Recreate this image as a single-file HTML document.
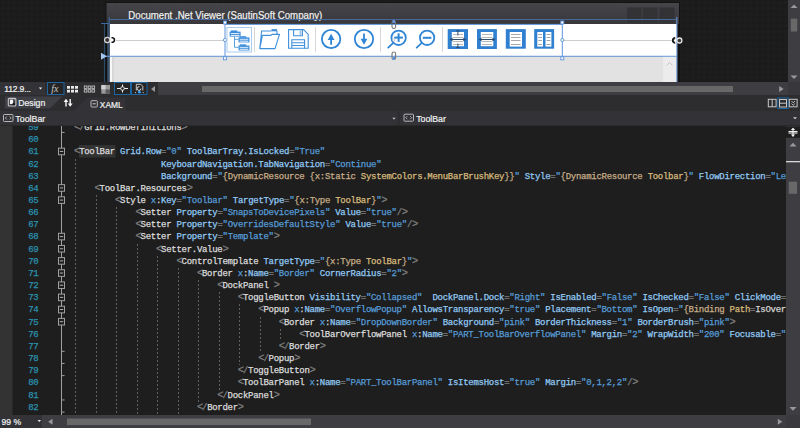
<!DOCTYPE html>
<html><head><meta charset="utf-8">
<style>
*{box-sizing:border-box}
html,body{margin:0;padding:0;width:800px;height:428px;overflow:hidden;background:#1e1e1e;font-family:"Liberation Sans",sans-serif}
.abs{position:absolute}
#design{position:absolute;left:0;top:0;width:800px;height:82px;background:#1f1f1f;overflow:hidden}
#win{position:absolute;left:106px;top:3px;width:573px;height:79px;background:#3a3a3d;border:1px solid #141414;border-bottom:none}
#title{position:absolute;left:128px;top:9px;font-size:9.66px;color:#f0f0f0;white-space:nowrap;line-height:12px}
#tb{position:absolute;left:109px;top:24px;width:567px;height:32px;background:#fff}
#gray{position:absolute;left:109px;top:56px;width:567px;height:26px;background:#e3e3e3}
#vsb1{position:absolute;left:788px;top:0;width:12px;height:83px;background:#3e3e42}
#row1{position:absolute;left:0;top:82px;width:800px;height:13px}
#row2{position:absolute;left:0;top:95px;width:800px;height:31px}
#row3{position:absolute;left:0;top:111px;width:800px;height:15px;background:#333337;border-bottom:1px solid #252526}
#editor{position:absolute;left:0;top:126px;width:800px;height:289px;background:#1e1e1e;overflow:hidden}
#lm{position:absolute;left:0;top:126px;width:12.5px;height:289px;background:#333333}
#codeclip{position:absolute;left:0;top:126px;width:786px;height:289px;overflow:hidden}
.ln{position:absolute;white-space:pre;-webkit-text-stroke:0.25px currentColor;font-family:"Liberation Mono",monospace;font-size:9px;letter-spacing:-0.28px;line-height:12.16px;height:12.16px;color:#dcdcdc}
.num{position:absolute;-webkit-text-stroke:0.25px currentColor;left:0;width:38.5px;text-align:right;white-space:pre;font-family:"Liberation Mono",monospace;font-size:9px;letter-spacing:-0.28px;line-height:12.16px;color:#2b91af}
.g{position:absolute;width:1px;background:repeating-linear-gradient(to bottom,#5f5f5f 0 2px,transparent 2px 4px)}
.d{color:#808080}.big{font-size:10.4px;letter-spacing:-1.12px;line-height:1px}.e{color:#dcdcdc}.a{color:#92caf4}.n{color:#569cd6}.c{color:#d4d4d4}.v{color:#569cd6}
.mb{color:#c8ad88}.mv{color:#d7ba7d}.mp{color:#d7ba7d}.mw{color:#d4d4d4}
#vsb2{position:absolute;left:786px;top:126px;width:14px;height:289px}
#status{position:absolute;left:0;top:414.5px;width:800px;height:13.5px}
.ui{position:absolute;white-space:nowrap;color:#f1f1f1;font-size:9px;line-height:11px;-webkit-text-stroke:0.2px currentColor}
</style></head><body>
<div id="design">
<svg id="dsvg" width="800" height="82" viewBox="0 0 800 82" style="position:absolute;left:0;top:0">
<defs>
<pattern id="tex" width="5.8" height="5.8" patternUnits="userSpaceOnUse"><rect width="5.8" height="5.8" fill="#1c1c1c"/><rect x="0" y="0" width="1.2" height="1.2" fill="#171717"/><rect x="3.8" y="0" width="1.2" height="1.2" fill="#191919"/><rect x="0" y="3.8" width="1.2" height="1.2" fill="#191919"/><rect x="1.5" y="1.5" width="2" height="2" fill="#1f1f1f"/></pattern>
<linearGradient id="tg" x1="0" y1="0" x2="0" y2="1"><stop offset="0" stop-color="#46464a"/><stop offset="1" stop-color="#38383c"/></linearGradient>
</defs>
<rect x="0" y="0" width="800" height="82" fill="url(#tex)"/>
<!-- window -->
<rect x="105.5" y="2" width="574.5" height="80" fill="#121212"/>
<rect x="106.5" y="3" width="572.5" height="21" fill="url(#tg)"/>
<rect x="627" y="7.5" width="14.5" height="15" fill="#333336"/>
<rect x="643" y="7.5" width="14.5" height="15" fill="#333336"/>
<rect x="659.5" y="7.5" width="15" height="15" fill="#333336"/>
<text x="128.3" y="18.8" font-family="Liberation Sans" font-size="10.4" textLength="194" lengthAdjust="spacingAndGlyphs" fill="#f2f2f2" stroke="#f2f2f2" stroke-width="0.2">Document .Net Viewer (SautinSoft Company)</text>
<!-- left dark strip -->
<rect x="106.5" y="24" width="3.4" height="58" fill="#3a5068"/>
<rect x="106" y="24" width="1.2" height="58" fill="#0e0e0e"/>
<!-- toolbar white -->
<rect x="109.9" y="24" width="567.3" height="32.5" fill="#ffffff"/>
<!-- gray area -->
<rect x="109.9" y="56.5" width="567.3" height="25.5" fill="#e2e2e2"/>
<rect x="109.9" y="56.5" width="2.3" height="25.5" fill="#f8f8f8"/>
<rect x="112.2" y="56.5" width="1.6" height="25.5" fill="#d4d4d4"/>
<rect x="663" y="56.5" width="13.5" height="25.5" fill="#ececec"/>
<path d="M666.5 65.5 L669.5 62.5 L672.5 65.5" fill="none" stroke="#c0c0c0" stroke-width="0.9"/>
<!-- blue lines -->
<line x1="104.5" y1="23.5" x2="104.5" y2="82" stroke="#2c4a6a" stroke-width="1.2"/>
<line x1="101" y1="23.5" x2="109.5" y2="23.5" stroke="#3d6aa0" stroke-width="1"/>
<line x1="109.3" y1="17" x2="109.3" y2="24" stroke="#3d6aa0" stroke-width="1"/>
<line x1="109.5" y1="19.5" x2="676.5" y2="19.5" stroke="#48699a" stroke-width="1"/>
<line x1="676.8" y1="17" x2="676.8" y2="82" stroke="#6a9ad8" stroke-width="1"/>
<line x1="105" y1="56.3" x2="677" y2="56.3" stroke="#6d9ee3" stroke-width="1.1"/>
<path d="M101 52.8 L106.8 56.3 L101 59.8 Z" fill="#a8c8f4"/>
<line x1="225" y1="24.4" x2="562.3" y2="24.4" stroke="#5f93dc" stroke-width="1"/>
<!-- center line -->
<line x1="116" y1="40.5" x2="225" y2="40.5" stroke="#cdcdcd" stroke-width="1"/>
<line x1="563" y1="40.5" x2="671" y2="40.5" stroke="#cdcdcd" stroke-width="1"/>
<!-- link adorners -->
<circle cx="107.2" cy="40" r="2.6" fill="#333" stroke="#d8d8d8" stroke-width="1.2"/>
<path d="M111.5 37.8 A2.3 2.3 0 1 1 111.5 42.2" fill="none" stroke="#111" stroke-width="1.6"/>
<path d="M675.2 38 A2.4 2.4 0 1 0 675.2 42.8" fill="none" stroke="#1a1a1a" stroke-width="2"/>
<circle cx="679.4" cy="40.5" r="2.5" fill="#3a3a3a" stroke="#e6e6e6" stroke-width="1.3"/>
<!-- selection -->
<line x1="225" y1="22.5" x2="225" y2="58" stroke="#5f93dc" stroke-width="1"/>
<line x1="562.3" y1="22.5" x2="562.3" y2="58" stroke="#5f93dc" stroke-width="1"/>
<g fill="#fff" stroke="#5f93dc" stroke-width="0.9">
<rect x="223.5" y="21" width="3" height="3"/><rect x="223.5" y="56.8" width="3" height="3"/>
<rect x="560.8" y="21" width="3" height="3"/><rect x="560.8" y="56.8" width="3" height="3"/>
<circle cx="225" cy="40" r="1.6"/><circle cx="562.3" cy="40" r="1.6"/>
</g>
<!-- margin adorners -->
<g fill="none" stroke="#777" stroke-width="1.1">
<rect x="392" y="21" width="3.6" height="7.5" rx="1.8"/>
<rect x="392" y="52" width="3.6" height="7.5" rx="1.8"/>
</g>
<rect x="392.6" y="20" width="2.4" height="3" fill="#5f93dc"/>
<rect x="392.6" y="57" width="2.4" height="3" fill="#5f93dc"/>
<!-- tree box -->
<rect x="227" y="27.5" width="24.5" height="24.5" fill="none" stroke="#a9cbf2" stroke-width="1"/>
<!-- separators -->
<g stroke="#d6d6d6" stroke-width="1">
<line x1="254.5" y1="27" x2="254.5" y2="52"/>
<line x1="315.5" y1="27" x2="315.5" y2="52"/>
<line x1="380.5" y1="27" x2="380.5" y2="52"/>
<line x1="442.5" y1="27" x2="442.5" y2="52"/>
</g>
<!-- tree icon -->
<g stroke="#5a9fe0" stroke-width="1" fill="none">
<path d="M234.5 36.7 V47.3 H238.5 M234.5 39.3 H238.5"/>
</g>
<rect x="230.8" y="30.4" width="6.5" height="1.6" fill="#3f8fdc"/><rect x="229.6" y="31.6" width="11" height="5" fill="#3f8fdc"/><rect x="230.8" y="33.0" width="8.6" height="1" fill="#d6e8fa"/><rect x="230.8" y="34.9" width="8.6" height="0.9" fill="#ffffff"/><rect x="239.7" y="36.2" width="6.5" height="1.6" fill="#3f8fdc"/><rect x="238.5" y="37.4" width="11" height="5" fill="#3f8fdc"/><rect x="239.7" y="38.8" width="8.6" height="1" fill="#d6e8fa"/><rect x="239.7" y="40.7" width="8.6" height="0.9" fill="#ffffff"/><rect x="239.7" y="44.3" width="6.5" height="1.6" fill="#3f8fdc"/><rect x="238.5" y="45.5" width="11" height="5" fill="#3f8fdc"/><rect x="239.7" y="46.9" width="8.6" height="1" fill="#d6e8fa"/><rect x="239.7" y="48.8" width="8.6" height="0.9" fill="#ffffff"/>
<!-- folder -->
<g stroke="#3f8fdc" stroke-width="1.1" fill="none" stroke-linejoin="round">
<path d="M259.8 48.6 L261.6 31 H271.5 M262.4 35.4 H271 L272 34.4 H279.5 L275 48.6 H259.8 Z"/>
<path d="M277 31 V34.4"/>
</g>
<rect x="271.5" y="29.1" width="5.6" height="2.2" fill="#3f8fdc"/>
<!-- save -->
<g stroke="#3f8fdc" stroke-width="1.1" fill="none" stroke-linejoin="round">
<path d="M288.6 29.6 H303.6 L308.2 34.4 V48.3 H288.6 Z"/>
<path d="M293.6 29.6 V35.8 H302.4 V29.6"/>
<path d="M291.8 48.3 V39.8 H304.6 V48.3 M291.8 42.7 H304.6 M291.8 45.5 H304.6"/>
</g>
<rect x="299.6" y="30.5" width="1.8" height="4.5" fill="#9cc4ee"/>
<!-- up/down -->
<g stroke="#2f85d6" stroke-width="1.8" fill="none">
<circle cx="331.1" cy="39" r="9.2"/>
<circle cx="364" cy="39" r="9.2"/>
<line x1="331.1" y1="38" x2="331.1" y2="44.7"/>
<line x1="364" y1="33.5" x2="364" y2="40"/>
</g>
<g fill="#2f85d6">
<path d="M327.7 40 L331.1 33.8 L334.5 40 Z"/>
<path d="M360.6 38.8 L364 44.8 L367.4 38.8 Z"/>
</g>
<!-- zoom in/out -->
<g stroke="#2f85d6" stroke-width="1.8" fill="none" stroke-linecap="round">
<circle cx="398.6" cy="37.8" r="7.2"/>
<line x1="393" y1="43.2" x2="388.2" y2="47.6"/>
<line x1="394.3" y1="37.6" x2="402.9" y2="37.6" stroke-width="2" stroke-linecap="butt"/>
<line x1="398.6" y1="33.3" x2="398.6" y2="41.9" stroke-width="2" stroke-linecap="butt"/>
<circle cx="427.1" cy="37.8" r="7.2"/>
<line x1="421.5" y1="43.2" x2="416.7" y2="47.6"/>
<line x1="422.8" y1="37.8" x2="431.4" y2="37.8" stroke-width="2" stroke-linecap="butt"/>
</g>
<circle cx="393.6" cy="40" r="1.3" fill="#fff" stroke="#9ab" stroke-width="0.6"/>
<!-- fit page -->
<rect x="447.7" y="29.1" width="20.3" height="19.9" fill="#2f80d0"/>
<rect x="451.8" y="32" width="12.2" height="14.2" fill="#fff"/>
<g stroke="#b8b8b8" stroke-width="1">
<line x1="453" y1="34.5" x2="463" y2="34.5"/><line x1="453" y1="37.5" x2="463" y2="37.5"/>
<line x1="453" y1="41.5" x2="463" y2="41.5"/><line x1="453" y1="44.5" x2="463" y2="44.5"/>
</g>
<g stroke="#2d4d72" stroke-width="1" fill="#2d4d72">
<line x1="451" y1="39.5" x2="465" y2="39.5"/>
<line x1="457.9" y1="31" x2="457.9" y2="35.5"/><line x1="457.9" y1="43.5" x2="457.9" y2="47.5"/>
<line x1="456" y1="30.8" x2="459.8" y2="30.8"/><line x1="456" y1="47.6" x2="459.8" y2="47.6"/>
</g>
<path d="M449.6 39.5 L452.5 37.6 V41.4 Z M466.2 39.5 L463.3 37.6 V41.4 Z" fill="#2d4d72"/>
<!-- fit width -->
<rect x="477" y="29.1" width="19.9" height="19.9" fill="#2f80d0"/>
<rect x="480.8" y="32" width="12.5" height="14.2" fill="#fff"/>
<g stroke="#b8b8b8" stroke-width="1">
<line x1="482" y1="34.5" x2="492" y2="34.5"/><line x1="482" y1="37.5" x2="492" y2="37.5"/>
<line x1="482" y1="41.5" x2="492" y2="41.5"/><line x1="482" y1="44.5" x2="492" y2="44.5"/>
</g>
<line x1="480" y1="39.5" x2="494" y2="39.5" stroke="#2d4d72" stroke-width="1"/>
<path d="M478.6 39.5 L481.5 37.6 V41.4 Z M495.4 39.5 L492.5 37.6 V41.4 Z" fill="#2d4d72"/>
<!-- single page -->
<rect x="505.8" y="29.1" width="20" height="19.6" fill="#2f80d0"/>
<rect x="509.7" y="32" width="12.3" height="14.6" fill="#fff"/>
<g stroke="#a8a8a8" stroke-width="1">
<line x1="511" y1="34.5" x2="520.5" y2="34.5"/><line x1="511" y1="37.5" x2="520.5" y2="37.5"/>
<line x1="511" y1="40.5" x2="520.5" y2="40.5"/><line x1="511" y1="44.5" x2="520.5" y2="44.5"/>
</g>
<!-- two pages -->
<rect x="534.2" y="29.1" width="19.9" height="19.6" fill="#2f80d0"/>
<rect x="537.3" y="32" width="5.7" height="14.6" fill="#fff"/>
<rect x="545.5" y="32" width="5.9" height="14.6" fill="#fff"/>
<g stroke="#9aa4ae" stroke-width="1">
<line x1="538.3" y1="34.5" x2="542" y2="34.5"/><line x1="538.3" y1="37.5" x2="542" y2="37.5"/>
<line x1="538.3" y1="40.5" x2="542" y2="40.5"/><line x1="538.3" y1="44.5" x2="542" y2="44.5"/>
<line x1="546.5" y1="34.5" x2="550.4" y2="34.5"/><line x1="546.5" y1="37.5" x2="550.4" y2="37.5"/>
<line x1="546.5" y1="40.5" x2="550.4" y2="40.5"/><line x1="546.5" y1="44.5" x2="550.4" y2="44.5"/>
</g>
<!-- right vertical scrollbar -->
<rect x="788" y="0" width="12" height="82" fill="#3e3e42"/>
<path d="M790.5 8 L794 4.5 L797.5 8 Z" fill="#999"/>
<rect x="790.8" y="18.7" width="6.4" height="12.8" fill="#686868"/>
<path d="M790.5 75.5 L794 79 L797.5 75.5 Z" fill="#999"/>
</svg>
</div>
<div id="row1">
<svg width="800" height="13" viewBox="0 82 800 13" style="position:absolute;left:0;top:0">
<rect x="0" y="82" width="800" height="13" fill="#2d2d30"/>
<rect x="158" y="82" width="630" height="13" fill="#3e3e42"/>
<rect x="788" y="82" width="12" height="13" fill="#38383c"/>
<rect x="0" y="82" width="45" height="13" fill="#333337"/>
<path d="M38.8 87.6 H42.2 L40.5 89.6 Z" fill="#f0f0f0"/>
<rect x="47.5" y="82.5" width="16.5" height="12" fill="#252526" stroke="#1d65a0" stroke-width="1"/>
<text x="51.3" y="92" font-family="Liberation Serif" font-style="italic" font-size="10" fill="#c8c8c8">fx</text>
<g fill="#e8e8e8">
<rect x="67" y="86" width="3" height="2.7"/><rect x="71" y="86" width="3" height="2.7"/><rect x="75" y="86" width="3" height="2.7"/>
<rect x="67" y="89.8" width="3" height="2.7"/><rect x="71" y="89.8" width="3" height="2.7"/><rect x="75" y="89.8" width="3" height="2.7"/>
</g>
<g fill="none" stroke="#bdbdbd" stroke-width="0.9">
<rect x="84.3" y="86" width="2.6" height="2.4"/><rect x="88.2" y="86" width="2.6" height="2.4"/><rect x="92" y="86" width="2.6" height="2.4"/>
<rect x="84.3" y="89.7" width="2.6" height="2.4"/><rect x="88.2" y="89.7" width="2.6" height="2.4"/><rect x="92" y="89.7" width="2.6" height="2.4"/>
</g>
<rect x="101.3" y="85" width="8.7" height="8.7" fill="#9a9a9a"/>
<rect x="101.3" y="85" width="4.3" height="4.3" fill="#d0d0d0"/>
<rect x="105.6" y="89.4" width="4.4" height="4.3" fill="#5c5c5c"/>
<rect x="114.5" y="82.5" width="16" height="12" fill="#252526" stroke="#1d65a0" stroke-width="1"/>
<g stroke="#f0f0f0" stroke-width="1" fill="none"><line x1="117" y1="88.5" x2="128" y2="88.5"/><line x1="122.5" y1="84.5" x2="122.5" y2="92.5"/></g>
<circle cx="122.5" cy="88.5" r="1.8" fill="#252526" stroke="#f0f0f0" stroke-width="0.9"/>
<rect x="131.5" y="82.5" width="15.5" height="12" fill="#252526" stroke="#1d65a0" stroke-width="1"/>
<path d="M136.3 90.5 V84.3 H140.8 L142.8 86.3 V90.5" fill="none" stroke="#d8d8d8" stroke-width="0.9"/>
<path d="M141 88.6 A1.9 1.9 0 1 1 139.5 86.7" fill="none" stroke="#e8e8e8" stroke-width="0.9"/>
<circle cx="139.4" cy="92.2" r="1.4" fill="#3a9ff0"/>
<circle cx="135.6" cy="92.6" r="0.6" fill="#ccc"/><circle cx="143.2" cy="92.6" r="0.6" fill="#ccc"/>
<path d="M155 86 V92 L151 89 Z" fill="#999"/>
<rect x="202" y="86" width="531" height="6" fill="#686868"/>
<path d="M779.2 86 V92 L783.6 89 Z" fill="#999"/>
</svg>
</div>
<div id="row2">
<svg width="800" height="31" viewBox="0 95 800 31" style="position:absolute;left:0;top:0">
<rect x="0" y="95" width="800" height="16" fill="#2d2d30"/>
<path d="M74 111 L87.5 97.5 H125.5 V111 Z" fill="#333337"/>
<path d="M5 96.5 H62 L50 108.5 H5 Z" fill="#3f3f46"/>
<rect x="8.3" y="98.4" width="7.6" height="7.6" rx="1" fill="#3f3f46" stroke="#c4c4c4" stroke-width="1.1"/>
<rect x="9.9" y="99.6" width="3.2" height="4.4" fill="#f4f4f4"/>
<circle cx="13.6" cy="104.1" r="1.2" fill="#111"/>
<path d="M14.2 99.2 L15.3 100.3" stroke="#aaa" stroke-width="0.8"/>
<g stroke="#f8f8f8" stroke-width="1.4">
<line x1="66" y1="101" x2="66" y2="106.5"/><line x1="70.2" y1="99" x2="70.2" y2="104.5"/>
</g>
<path d="M63.6 102 L66 98.8 L68.4 102 Z M67.8 103.5 L70.2 106.7 L72.6 103.5 Z" fill="#f8f8f8"/>
<rect x="91" y="100.7" width="6.3" height="6.3" rx="0.6" fill="none" stroke="#b8b8b8" stroke-width="1"/>
<line x1="92.6" y1="103.8" x2="95.7" y2="103.8" stroke="#d0d0d0" stroke-width="1"/>
<rect x="111" y="111" width="689" height="14.5" fill="#333337"/>
<rect x="0" y="111" width="800" height="14.5" fill="#333337"/>
<rect x="0" y="125" width="800" height="1" fill="#29292c"/>
<line x1="398.8" y1="111.5" x2="398.8" y2="125" stroke="#28282b" stroke-width="1"/>
<path d="M392.3 117.8 H395.7 L394 119.4 Z" fill="#d0d0d0"/>
<path d="M793 117.3 H797 L795 119.2 Z" fill="#d0d0d0"/>
<rect x="3.5" y="114.5" width="9.5" height="7" rx="0.8" fill="none" stroke="#b8b8b8" stroke-width="1"/>
<path d="M6.8 116.5 L5.3 118 L6.8 119.5 M9.7 116.5 L11.2 118 L9.7 119.5" fill="none" stroke="#c8c8c8" stroke-width="0.8"/>
<rect x="404" y="114.2" width="9.5" height="7" rx="0.8" fill="none" stroke="#b8b8b8" stroke-width="1"/>
<path d="M407.3 116.2 L405.8 117.7 L407.3 119.2 M410.2 116.2 L411.7 117.7 L410.2 119.2" fill="none" stroke="#c8c8c8" stroke-width="0.8"/>
<rect x="768.3" y="99.3" width="7.8" height="7.5" fill="none" stroke="#c8c8c8" stroke-width="1"/>
<line x1="772.2" y1="99.3" x2="772.2" y2="106.8" stroke="#c8c8c8" stroke-width="1"/>
<rect x="777.8" y="97.9" width="10.4" height="10.6" fill="none" stroke="#1d65a0" stroke-width="1"/>
<rect x="779.5" y="99.5" width="7" height="7.5" fill="none" stroke="#c8c8c8" stroke-width="1"/>
<line x1="779.5" y1="103.2" x2="786.5" y2="103.2" stroke="#c8c8c8" stroke-width="1"/>
<rect x="789.3" y="99.3" width="7.8" height="7.5" fill="none" stroke="#c8c8c8" stroke-width="1"/>
<path d="M791.5 101 L793.2 102.8 L795 101 M791.5 103.5 L793.2 105.3 L795 103.5" fill="none" stroke="#e0e0e0" stroke-width="0.8"/>
</svg>
</div>
<div class="ui" style="left:18.2px;top:98.2px;font-size:8.7px">Design</div>
<div class="ui" style="left:99.8px;top:99.8px;font-size:8.4px">XAML</div>
<div class="ui" style="left:15.3px;top:113.8px;font-size:8.85px">ToolBar</div>
<div class="ui" style="left:416.2px;top:114px;font-size:8.75px">ToolBar</div>
<div class="ui" style="left:4.3px;top:84.2px;font-size:8.6px;letter-spacing:-0.19px">112.9...</div>
<div id="editor"></div>
<div id="codeclip">
  <div style="position:absolute;left:0;top:-126px;width:800px;height:428px">
<svg width="800" height="428" style="position:absolute;left:0;top:0" viewBox="0 0 800 428">
<rect x="0" y="0" width="12.5" height="428" fill="#333333"/>
<rect x="79" y="145" width="36.5" height="12.5" fill="#333333"/>
<line x1="61.5" y1="126" x2="61.5" y2="415" stroke="#a0a0a0" stroke-width="1"/>
<line x1="61.5" y1="132.44" x2="64.6" y2="132.44" stroke="#a0a0a0" stroke-width="1"/>
<line x1="61.5" y1="351.32" x2="64.6" y2="351.32" stroke="#a0a0a0" stroke-width="1"/>
<line x1="61.5" y1="363.48" x2="64.6" y2="363.48" stroke="#a0a0a0" stroke-width="1"/>
<line x1="61.5" y1="375.64" x2="64.6" y2="375.64" stroke="#a0a0a0" stroke-width="1"/>
<line x1="61.5" y1="399.96" x2="64.6" y2="399.96" stroke="#a0a0a0" stroke-width="1"/>
<line x1="61.5" y1="412.12" x2="64.6" y2="412.12" stroke="#a0a0a0" stroke-width="1"/>
<rect x="58.5" y="148.16" width="6" height="6.6" fill="#1e1e1e" stroke="#a0a0a0" stroke-width="1"/>
<line x1="59.8" y1="151.46" x2="63.2" y2="151.46" stroke="#b0b0b0" stroke-width="1"/>
<rect x="58.5" y="184.64" width="6" height="6.6" fill="#1e1e1e" stroke="#a0a0a0" stroke-width="1"/>
<line x1="59.8" y1="187.94" x2="63.2" y2="187.94" stroke="#b0b0b0" stroke-width="1"/>
<rect x="58.5" y="196.80" width="6" height="6.6" fill="#1e1e1e" stroke="#a0a0a0" stroke-width="1"/>
<line x1="59.8" y1="200.10" x2="63.2" y2="200.10" stroke="#b0b0b0" stroke-width="1"/>
<rect x="58.5" y="233.28" width="6" height="6.6" fill="#1e1e1e" stroke="#a0a0a0" stroke-width="1"/>
<line x1="59.8" y1="236.58" x2="63.2" y2="236.58" stroke="#b0b0b0" stroke-width="1"/>
<rect x="58.5" y="245.44" width="6" height="6.6" fill="#1e1e1e" stroke="#a0a0a0" stroke-width="1"/>
<line x1="59.8" y1="248.74" x2="63.2" y2="248.74" stroke="#b0b0b0" stroke-width="1"/>
<rect x="58.5" y="257.60" width="6" height="6.6" fill="#1e1e1e" stroke="#a0a0a0" stroke-width="1"/>
<line x1="59.8" y1="260.90" x2="63.2" y2="260.90" stroke="#b0b0b0" stroke-width="1"/>
<rect x="58.5" y="269.76" width="6" height="6.6" fill="#1e1e1e" stroke="#a0a0a0" stroke-width="1"/>
<line x1="59.8" y1="273.06" x2="63.2" y2="273.06" stroke="#b0b0b0" stroke-width="1"/>
<rect x="58.5" y="281.92" width="6" height="6.6" fill="#1e1e1e" stroke="#a0a0a0" stroke-width="1"/>
<line x1="59.8" y1="285.22" x2="63.2" y2="285.22" stroke="#b0b0b0" stroke-width="1"/>
<rect x="58.5" y="294.08" width="6" height="6.6" fill="#1e1e1e" stroke="#a0a0a0" stroke-width="1"/>
<line x1="59.8" y1="297.38" x2="63.2" y2="297.38" stroke="#b0b0b0" stroke-width="1"/>
<rect x="58.5" y="306.24" width="6" height="6.6" fill="#1e1e1e" stroke="#a0a0a0" stroke-width="1"/>
<line x1="59.8" y1="309.54" x2="63.2" y2="309.54" stroke="#b0b0b0" stroke-width="1"/>
<rect x="58.5" y="318.40" width="6" height="6.6" fill="#1e1e1e" stroke="#a0a0a0" stroke-width="1"/>
<line x1="59.8" y1="321.70" x2="63.2" y2="321.70" stroke="#b0b0b0" stroke-width="1"/>
</svg>
<div class="num" style="top:122.04px">59</div>
<div class="num" style="top:134.20px">60</div>
<div class="num" style="top:146.36px">61</div>
<div class="num" style="top:158.52px">62</div>
<div class="num" style="top:170.68px">63</div>
<div class="num" style="top:182.84px">64</div>
<div class="num" style="top:195.00px">65</div>
<div class="num" style="top:207.16px">66</div>
<div class="num" style="top:219.32px">67</div>
<div class="num" style="top:231.48px">68</div>
<div class="num" style="top:243.64px">69</div>
<div class="num" style="top:255.80px">70</div>
<div class="num" style="top:267.96px">71</div>
<div class="num" style="top:280.12px">72</div>
<div class="num" style="top:292.28px">73</div>
<div class="num" style="top:304.44px">74</div>
<div class="num" style="top:316.60px">75</div>
<div class="num" style="top:328.76px">76</div>
<div class="num" style="top:340.92px">77</div>
<div class="num" style="top:353.08px">78</div>
<div class="num" style="top:365.24px">79</div>
<div class="num" style="top:377.40px">80</div>
<div class="num" style="top:389.56px">81</div>
<div class="num" style="top:401.72px">82</div>
<div class="g" style="left:75.20px;top:158.52px;height:255.36px"></div>
<div class="g" style="left:95.68px;top:195.00px;height:218.88px"></div>
<div class="g" style="left:116.16px;top:207.16px;height:206.72px"></div>
<div class="g" style="left:136.64px;top:243.64px;height:170.24px"></div>
<div class="g" style="left:157.12px;top:255.80px;height:158.08px"></div>
<div class="g" style="left:177.60px;top:267.96px;height:145.92px"></div>
<div class="g" style="left:198.08px;top:280.12px;height:121.60px"></div>
<div class="g" style="left:218.56px;top:292.28px;height:97.28px"></div>
<div class="g" style="left:239.04px;top:304.44px;height:60.80px"></div>
<div class="g" style="left:259.52px;top:316.60px;height:36.48px"></div>
<div class="g" style="left:280.00px;top:328.76px;height:12.16px"></div>
<div class="ln" style="top:122.04px;left:74.00px"><span class="d big">&lt;</span><span class="d">/</span><span class="e">Grid.RowDefinitions</span><span class="d big">&gt;</span></div>
<div class="ln" style="top:134.20px;left:74.00px"></div>
<div class="ln" style="top:146.36px;left:74.00px"><span class="d big">&lt;</span><span class="e">ToolBar</span> <span class="a">Grid.Row</span><span class="d">=</span><span class="v">"</span><span class="v">0</span><span class="v">"</span> <span class="a">ToolBarTray.IsLocked</span><span class="d">=</span><span class="v">"</span><span class="v">True</span><span class="v">"</span></div>
<div class="ln" style="top:158.52px;left:161.04px"><span class="a">KeyboardNavigation.TabNavigation</span><span class="d">=</span><span class="v">"</span><span class="v">Continue</span><span class="v">"</span></div>
<div class="ln" style="top:170.68px;left:161.04px"><span class="a">Background</span><span class="d">=</span><span class="v">"</span><span class="mb">{</span><span class="mb">DynamicResource</span> <span class="mb">{</span><span class="mb">x:Static</span> <span class="mv">SystemColors.MenuBarBrushKey</span><span class="mb">}</span><span class="mb">}</span><span class="v">"</span> <span class="a">Style</span><span class="d">=</span><span class="v">"</span><span class="mb">{</span><span class="mb">DynamicResource</span> <span class="mv">Toolbar</span><span class="mb">}</span><span class="v">"</span> <span class="a">FlowDirection</span><span class="d">=</span><span class="v">"</span><span class="v">LeftToRight</span><span class="v">"</span><span class="d big">&gt;</span></div>
<div class="ln" style="top:182.84px;left:94.48px"><span class="d big">&lt;</span><span class="e">ToolBar.Resources</span><span class="d big">&gt;</span></div>
<div class="ln" style="top:195.00px;left:114.96px"><span class="d big">&lt;</span><span class="e">Style</span> <span class="n">x</span><span class="c">:</span><span class="a">Key</span><span class="d">=</span><span class="v">"</span><span class="v">Toolbar</span><span class="v">"</span> <span class="a">TargetType</span><span class="d">=</span><span class="v">"</span><span class="mb">{</span><span class="mb">x:Type</span> <span class="mv">ToolBar</span><span class="mb">}</span><span class="v">"</span><span class="d big">&gt;</span></div>
<div class="ln" style="top:207.16px;left:135.44px"><span class="d big">&lt;</span><span class="e">Setter</span> <span class="a">Property</span><span class="d">=</span><span class="v">"</span><span class="v">SnapsToDevicePixels</span><span class="v">"</span> <span class="a">Value</span><span class="d">=</span><span class="v">"</span><span class="v">true</span><span class="v">"</span><span class="d">/</span><span class="d big">&gt;</span></div>
<div class="ln" style="top:219.32px;left:135.44px"><span class="d big">&lt;</span><span class="e">Setter</span> <span class="a">Property</span><span class="d">=</span><span class="v">"</span><span class="v">OverridesDefaultStyle</span><span class="v">"</span> <span class="a">Value</span><span class="d">=</span><span class="v">"</span><span class="v">true</span><span class="v">"</span><span class="d">/</span><span class="d big">&gt;</span></div>
<div class="ln" style="top:231.48px;left:135.44px"><span class="d big">&lt;</span><span class="e">Setter</span> <span class="a">Property</span><span class="d">=</span><span class="v">"</span><span class="v">Template</span><span class="v">"</span><span class="d big">&gt;</span></div>
<div class="ln" style="top:243.64px;left:155.92px"><span class="d big">&lt;</span><span class="e">Setter.Value</span><span class="d big">&gt;</span></div>
<div class="ln" style="top:255.80px;left:176.40px"><span class="d big">&lt;</span><span class="e">ControlTemplate</span> <span class="a">TargetType</span><span class="d">=</span><span class="v">"</span><span class="mb">{</span><span class="mb">x:Type</span> <span class="mv">ToolBar</span><span class="mb">}</span><span class="v">"</span><span class="d big">&gt;</span></div>
<div class="ln" style="top:267.96px;left:196.88px"><span class="d big">&lt;</span><span class="e">Border</span> <span class="n">x</span><span class="c">:</span><span class="a">Name</span><span class="d">=</span><span class="v">"</span><span class="v">Border</span><span class="v">"</span> <span class="a">CornerRadius</span><span class="d">=</span><span class="v">"</span><span class="v">2</span><span class="v">"</span><span class="d big">&gt;</span></div>
<div class="ln" style="top:280.12px;left:217.36px"><span class="d big">&lt;</span><span class="e">DockPanel</span> <span class="d big">&gt;</span></div>
<div class="ln" style="top:292.28px;left:237.84px"><span class="d big">&lt;</span><span class="e">ToggleButton</span> <span class="a">Visibility</span><span class="d">=</span><span class="v">"</span><span class="v">Collapsed</span><span class="v">"</span>  <span class="a">DockPanel.Dock</span><span class="d">=</span><span class="v">"</span><span class="v">Right</span><span class="v">"</span> <span class="a">IsEnabled</span><span class="d">=</span><span class="v">"</span><span class="v">False</span><span class="v">"</span> <span class="a">IsChecked</span><span class="d">=</span><span class="v">"</span><span class="v">False</span><span class="v">"</span> <span class="a">ClickMode</span><span class="d">=</span><span class="v">"</span><span class="v">Press</span><span class="v">"</span></div>
<div class="ln" style="top:304.44px;left:258.32px"><span class="d big">&lt;</span><span class="e">Popup</span> <span class="n">x</span><span class="c">:</span><span class="a">Name</span><span class="d">=</span><span class="v">"</span><span class="v">OverflowPopup</span><span class="v">"</span> <span class="a">AllowsTransparency</span><span class="d">=</span><span class="v">"</span><span class="v">true</span><span class="v">"</span> <span class="a">Placement</span><span class="d">=</span><span class="v">"</span><span class="v">Bottom</span><span class="v">"</span> <span class="a">IsOpen</span><span class="d">=</span><span class="v">"</span><span class="mb">{</span><span class="mb">Binding</span> <span class="mp">Path</span><span class="d">=</span><span class="mw">IsOverflowOpen</span><span class="mb">}</span><span class="v">"</span></div>
<div class="ln" style="top:316.60px;left:278.80px"><span class="d big">&lt;</span><span class="e">Border</span> <span class="n">x</span><span class="c">:</span><span class="a">Name</span><span class="d">=</span><span class="v">"</span><span class="v">DropDownBorder</span><span class="v">"</span> <span class="a">Background</span><span class="d">=</span><span class="v">"</span><span class="v">pink</span><span class="v">"</span> <span class="a">BorderThickness</span><span class="d">=</span><span class="v">"</span><span class="v">1</span><span class="v">"</span> <span class="a">BorderBrush</span><span class="d">=</span><span class="v">"</span><span class="v">pink</span><span class="v">"</span><span class="d big">&gt;</span></div>
<div class="ln" style="top:328.76px;left:299.28px"><span class="d big">&lt;</span><span class="e">ToolBarOverflowPanel</span> <span class="n">x</span><span class="c">:</span><span class="a">Name</span><span class="d">=</span><span class="v">"</span><span class="v">PART_ToolBarOverflowPanel</span><span class="v">"</span> <span class="a">Margin</span><span class="d">=</span><span class="v">"</span><span class="v">2</span><span class="v">"</span> <span class="a">WrapWidth</span><span class="d">=</span><span class="v">"</span><span class="v">200</span><span class="v">"</span> <span class="a">Focusable</span><span class="d">=</span><span class="v">"</span><span class="v">true</span><span class="v">"</span></div>
<div class="ln" style="top:340.92px;left:278.80px"><span class="d big">&lt;</span><span class="d">/</span><span class="e">Border</span><span class="d big">&gt;</span></div>
<div class="ln" style="top:353.08px;left:258.32px"><span class="d big">&lt;</span><span class="d">/</span><span class="e">Popup</span><span class="d big">&gt;</span></div>
<div class="ln" style="top:365.24px;left:237.84px"><span class="d big">&lt;</span><span class="d">/</span><span class="e">ToggleButton</span><span class="d big">&gt;</span></div>
<div class="ln" style="top:377.40px;left:237.84px"><span class="d big">&lt;</span><span class="e">ToolBarPanel</span> <span class="n">x</span><span class="c">:</span><span class="a">Name</span><span class="d">=</span><span class="v">"</span><span class="v">PART_ToolBarPanel</span><span class="v">"</span> <span class="a">IsItemsHost</span><span class="d">=</span><span class="v">"</span><span class="v">true</span><span class="v">"</span> <span class="a">Margin</span><span class="d">=</span><span class="v">"</span><span class="v">0,1,2,2</span><span class="v">"</span><span class="d">/</span><span class="d big">&gt;</span></div>
<div class="ln" style="top:389.56px;left:217.36px"><span class="d big">&lt;</span><span class="d">/</span><span class="e">DockPanel</span><span class="d big">&gt;</span></div>
<div class="ln" style="top:401.72px;left:196.88px"><span class="d big">&lt;</span><span class="d">/</span><span class="e">Border</span><span class="d big">&gt;</span></div>
  </div>
</div>
<div id="vsb2"><svg width="14" height="289" viewBox="786 126 14 289" style="position:absolute;left:0;top:0">
<rect x="786" y="126" width="14" height="289" fill="#3e3e42"/>
<rect x="786" y="126.5" width="14" height="11.3" fill="#1f1f1f"/>
<g stroke="#f0f0f0" stroke-width="1.1" fill="#f0f0f0">
<line x1="788.5" y1="131.5" x2="797.5" y2="131.5"/><line x1="788.5" y1="133" x2="797.5" y2="133"/>
<line x1="793" y1="128.5" x2="793" y2="136.5"/>
</g>
<path d="M790.8 130 L793 127.8 L795.2 130 Z M790.8 134.5 L793 136.8 L795.2 134.5 Z" fill="#f0f0f0"/>
<path d="M789.5 146.5 L793 142.8 L796.5 146.5 Z" fill="#999"/>
<rect x="786" y="161" width="14" height="1.3" fill="#d8d8d8"/>
<rect x="788.7" y="181.7" width="8.4" height="12.1" fill="#686868"/>
<path d="M789.5 406.9 L793 410.8 L796.5 406.9 Z" fill="#999"/>
</svg></div>
<div id="status"><svg width="800" height="13.5" viewBox="0 414.5 800 13.5" style="position:absolute;left:0;top:0">
<rect x="0" y="414.5" width="800" height="13.5" fill="#3e3e42"/>
<rect x="0" y="414.5" width="42" height="13.5" fill="#333337"/>
<rect x="786" y="414.5" width="14" height="13.5" fill="#3a3a3e"/>
<path d="M37.6 419.5 H41 L39.3 421.5 Z" fill="#f0f0f0"/>
<path d="M52.5 418.3 V424.3 L48.2 421.3 Z" fill="#999"/>
<rect x="67" y="418" width="244" height="6.6" fill="#686868"/>
<path d="M777.8 418.3 V424.3 L782.3 421.3 Z" fill="#999"/>
</svg></div>
<div class="ui" style="left:1.5px;top:416.5px;font-size:8.6px">99 %</div>
</body></html>
